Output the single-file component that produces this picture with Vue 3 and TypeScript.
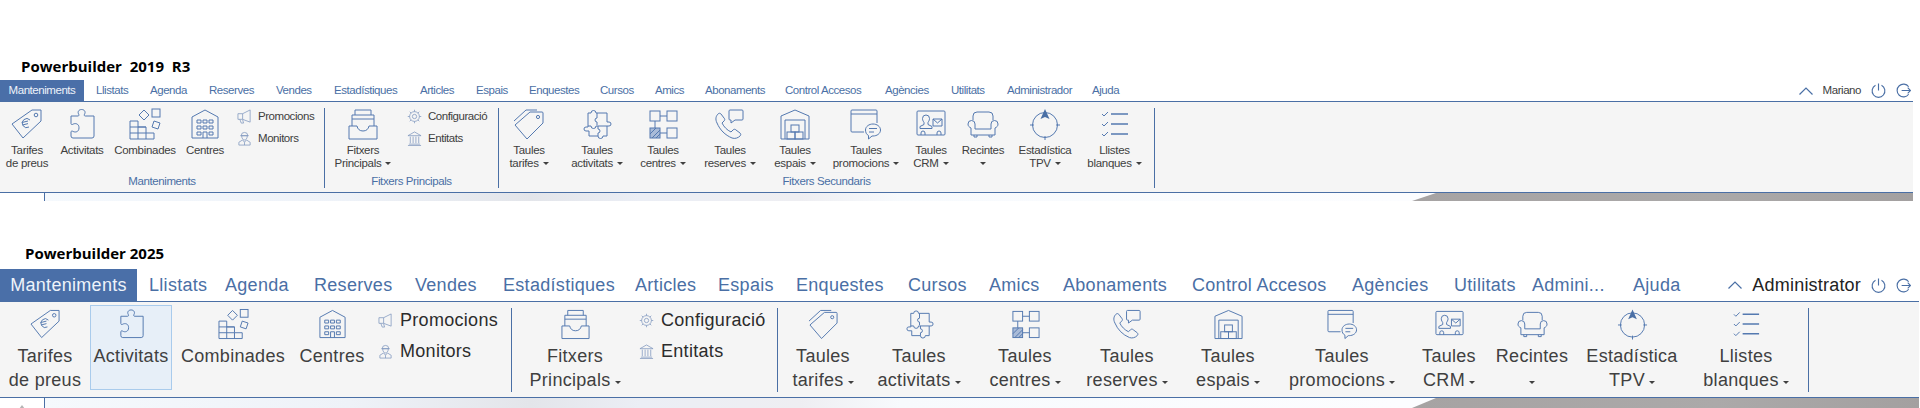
<script setup lang="ts">
interface Tab {
  name: string;
  w: number;
}

interface BigItem {
  icon: string;
  top: string;
  bottom?: string;
  w: number;
  caret?: boolean;
  hover?: boolean;
}

interface SmallItem {
  icon: string;
  name: string;
}

interface Group {
  label?: string;
  w: number;
  items: BigItem[];
  small?: SmallItem[];
  smallPad?: number;
}

interface Release {
  key: string;
  title: string;
  user: string;
  tabs: Tab[];
  groups: Group[];
}

const names = ['Llistats', 'Agenda', 'Reserves', 'Vendes', 'Estadístiques', 'Articles', 'Espais', 'Enquestes', 'Cursos', 'Amics', 'Abonaments', 'Control Accesos', 'Agències', 'Utilitats', 'Administrador', 'Ajuda'];
const widths2019 = [54, 59, 67, 58, 86, 56, 53, 71, 55, 50, 80, 100, 66, 56, 85, 40];
const widths2025 = [76, 89, 101, 88, 132, 83, 78, 112, 81, 74, 129, 160, 102, 78, 101, 60];

const makeTabs = (w: number[], short: boolean): Tab[] =>
  names.map((name, i) => ({ name: short && name === 'Administrador' ? 'Admini...' : name, w: w[i] }));

const small1: SmallItem[] = [
  { icon: 'megaphone', name: 'Promocions' },
  { icon: 'guard', name: 'Monitors' },
];
const small2: SmallItem[] = [
  { icon: 'gear', name: 'Configuració' },
  { icon: 'bank', name: 'Entitats' },
];

const secondary = (w: number[]): BigItem[] => [
  { icon: 'tags', top: 'Taules', bottom: 'tarifes', caret: true, w: w[0] },
  { icon: 'puzzle4', top: 'Taules', bottom: 'activitats', caret: true, w: w[1] },
  { icon: 'flow', top: 'Taules', bottom: 'centres', caret: true, w: w[2] },
  { icon: 'phone', top: 'Taules', bottom: 'reserves', caret: true, w: w[3] },
  { icon: 'warehouse', top: 'Taules', bottom: 'espais', caret: true, w: w[4] },
  { icon: 'chat', top: 'Taules', bottom: 'promocions', caret: true, w: w[5] },
  { icon: 'card', top: 'Taules', bottom: 'CRM', caret: true, w: w[6] },
  { icon: 'chair', top: 'Recintes', caret: true, w: w[7] },
  { icon: 'compass', top: 'Estadística', bottom: 'TPV', caret: true, w: w[8] },
  { icon: 'checks', top: 'Llistes', bottom: 'blanques', caret: true, w: w[9] },
];

const releases: Release[] = [
  {
    key: 'r2019',
    title: 'Powerbuilder  2019  R3',
    user: 'Mariano',
    tabs: makeTabs(widths2019, false),
    groups: [
      {
        label: 'Manteniments',
        w: 325,
        smallPad: 7,
        small: small1,
        items: [
          { icon: 'price', top: 'Tarifes', bottom: 'de preus', w: 54 },
          { icon: 'puzzle', top: 'Activitats', w: 56 },
          { icon: 'blocks', top: 'Combinades', w: 70 },
          { icon: 'building', top: 'Centres', w: 50 },
        ],
      },
      {
        label: 'Fitxers Principals',
        w: 174,
        smallPad: 6,
        small: small2,
        items: [{ icon: 'tray', top: 'Fitxers', bottom: 'Principals', caret: true, w: 76 }],
      },
      {
        label: 'Fitxers Secundaris',
        w: 656,
        items: secondary([60, 76, 56, 78, 52, 90, 40, 64, 60, 79]),
      },
    ],
  },
  {
    key: 'r2025',
    title: 'Powerbuilder 2025',
    user: 'Administrator',
    tabs: makeTabs(widths2025, true),
    groups: [
      {
        w: 512,
        smallPad: 8,
        small: small1,
        items: [
          { icon: 'price', top: 'Tarifes', bottom: 'de preus', w: 90 },
          { icon: 'puzzle', top: 'Activitats', w: 82, hover: true },
          { icon: 'blocks', top: 'Combinades', w: 122 },
          { icon: 'building', top: 'Centres', w: 76 },
        ],
      },
      {
        w: 266,
        smallPad: 1,
        small: small2,
        items: [{ icon: 'tray', top: 'Fitxers', bottom: 'Principals', caret: true, w: 126 }],
      },
      {
        w: 1031,
        items: secondary([90, 102, 110, 94, 108, 120, 94, 72, 128, 100]),
      },
    ],
  },
];
</script>

<template>
  <svg class="sprite" xmlns="http://www.w3.org/2000/svg">
    <symbol id="price" viewBox="0 0 32 32">
      <path d="M1 16 L21 2 H30 V13 L12 30 Z" />
      <circle cx="25" cy="7" r="1.8" />
      <path d="M19 12 a4.5 4.5 0 1 0 -1 7 M11 14.5 l6 -1.5 M11.5 17 l5.5 -1.4" />
    </symbol>
    <symbol id="puzzle" viewBox="0 0 32 32">
      <path d="M5 8 H12 c1 0 1.2 -1 .6 -2 c-1.2 -2 0 -4.5 3 -4.5 s4.2 2.5 3 4.5 c-.6 1 -.4 2 .6 2 H28 V28 a2 2 0 0 1 -2 2 H7 a2 2 0 0 1 -2 -2 V24 c0 -1 1 -1.2 2 -.6 c2 1.2 6 .8 6 -3.6 s-4 -4.8 -6 -3.6 c-1 .6 -2 .4 -2 -.6 Z" />
    </symbol>
    <symbol id="blocks" viewBox="0 0 32 32">
      <path d="M1 13 H9 V19 H17 V25 H25 V31 H1 Z M1 19 H17 M1 25 H17 M9 19 V31 M17 25 V31" />
      <path d="M15 2 L20 7 L15 12 L10 7 Z" />
      <rect x="23" y="1" width="8" height="8" />
      <path d="M25 13 L31 15 L29 21 L23 19 Z" />
    </symbol>
    <symbol id="building" viewBox="0 0 32 32">
      <path d="M3 30 V9 L16 2 L29 9 V30 Z" />
      <path d="M8 12 h4 v3 h-4 z M14 12 h4 v3 h-4 z M20 12 h4 v3 h-4 z M8 18 h4 v3 h-4 z M14 18 h4 v3 h-4 z M20 18 h4 v3 h-4 z M8 24 h4 v3 h-4 z M20 24 h4 v3 h-4 z M14 30 v-6 h4 v6" />
    </symbol>
    <symbol id="tray" viewBox="0 0 32 32">
      <path d="M2 18 H10 c.6 3 2.5 5 6 5 s5.400 -2 6 -5 H30 V31 H2 Z" />
      <path d="M5 18 V7 H27 V18 M8 7 V2 H24 V7 M5 11 H27" />
    </symbol>
    <symbol id="tags" viewBox="0 0 32 32">
      <path d="M2 17 L17 4 H29 a1 1 0 0 1 1 1 V15 L14 31 Z" />
      <path d="M1 13 L13 2 H24" />
      <circle cx="25" cy="9" r="1.6" />
    </symbol>
    <symbol id="puzzle4" viewBox="0 0 32 32">
      <path d="M7 5 h3 a2.500 2.500 0 0 1 5 0 h11 v9 h2 a2 2 0 0 1 0 4 h-2 v10 h-4 a2.500 2.500 0 0 1 -5 0 h-9 v-5 h-3 a2 2 0 0 1 0 -4 h2 z" />
      <path d="M16 5 v5 a2 2 0 0 0 0 4 v3 M7 18 h3 a2.500 2.500 0 0 0 5 0 h11 M17 18 v3 a2 2 0 0 1 0 4 v3" />
    </symbol>
    <symbol id="flow" viewBox="0 0 32 32">
      <rect x="3" y="3" width="10" height="10" />
      <rect x="20" y="3" width="10" height="10" />
      <rect class="hatched" x="3" y="20" width="10" height="10" />
      <rect x="20" y="20" width="10" height="10" />
      <path d="M13 8 H20 M8 13 V20 M13 25 H20 M3 26 L9 20 M5 30 L13 22 M9 30 L13 26" />
    </symbol>
    <symbol id="phone" viewBox="0 0 32 32">
      <path d="M4 6 c-2 2 -3 5 -1 9 c3 7 8 12 15 15 c3 1 6 0 8 -2 c1 -1 1 -2 0 -3 l-4 -3 c-1 -1 -2 -1 -3 0 l-2 2 c-4 -2 -7 -5 -9 -9 l2 -2 c1 -1 1 -2 0 -3 l-3 -4 c-1 -1 -2 -1 -3 0 z" />
      <path d="M16 2 H28 a1 1 0 0 1 1 1 V11 a1 1 0 0 1 -1 1 H21 L17 15 V12 H16 a1 1 0 0 1 -1 -1 V3 a1 1 0 0 1 1 -1 z" />
    </symbol>
    <symbol id="warehouse" viewBox="0 0 32 32">
      <path d="M2 31 V8 L16 2 L30 8 V31 Z" />
      <path d="M6 31 V12 H26 V31" />
      <rect x="12" y="17" width="8" height="7" />
      <rect x="8" y="24" width="8" height="7" />
      <rect x="16" y="24" width="8" height="7" />
    </symbol>
    <symbol id="chat" viewBox="0 0 32 32">
      <path d="M27 15 V3 a1 1 0 0 0 -1 -1 H2 a1 1 0 0 0 -1 1 V23 a1 1 0 0 0 1 1 H14 M1 6 H27" />
      <path d="M23 16 c4 0 7.500 2.500 7.500 6 s-3.500 6 -7.500 6 h-1 l-3.500 3 v-3.500 c-2 -1 -3 -3 -3 -5.500 c0 -3.500 3.500 -6 7.500 -6 z" />
      <path d="M19 20.500 H27 M19 24 H24" />
    </symbol>
    <symbol id="card" viewBox="0 0 32 32">
      <rect x="2" y="3" width="28" height="24" rx="1" />
      <path d="M11 7 a3.500 3.500 0 0 1 3.500 3.500 c0 2 -1 3 -1.500 4 v2 l4 2 v2 H5 v-2 l4 -2 v-2 c-.5 -1 -1.500 -2 -1.500 -4 A3.500 3.500 0 0 1 11 7 z" />
      <path d="M18 11 H27 V18 H18 Z M18 11 L22.500 15 L27 11 M6 27 v-2 a2 2 0 0 1 4 0 v2 M22 27 v-2 a2 2 0 0 1 4 0 v2" />
    </symbol>
    <symbol id="chair" viewBox="0 0 32 32">
      <path d="M6 12 V8 a4 4 0 0 1 4 -4 H22 a4 4 0 0 1 4 4 V12" />
      <path d="M8 21 H24 M8 21 V16 a3.500 3.500 0 0 0 -7 0 c0 2 1 3 3 4 V27 H28 V20 c2 -1 3 -2 3 -4 a3.500 3.500 0 0 0 -7 0 V21" />
      <path d="M7 27 V29 H10 V27 M22 27 V29 H25 V27" />
    </symbol>
    <symbol id="compass" viewBox="0 0 32 32">
      <circle cx="16" cy="17" r="12.500" />
      <path d="M1 17 H5 M27 17 H31 M16 28 V32" />
      <path class="solid" d="M16 1 L20.500 11 L16 9 L11.500 11 Z" />
    </symbol>
    <symbol id="checks" viewBox="0 0 32 32">
      <path d="M3 6 L5 8 L9 4 M3 16 L5 18 L9 14 M3 26 L5 28 L9 24" />
      <path class="thick" d="M12 6 H29 M12 16 H29 M12 26 H29" />
    </symbol>
    <symbol id="megaphone" viewBox="0 0 16 16">
      <path d="M1 5 H6 L14 1 V14 L6 11 H1 Z M6 5 V11 M3 11 L4.500 15 H7 L6 11.500" />
    </symbol>
    <symbol id="guard" viewBox="0 0 16 16">
      <path d="M4.500 5 a3.500 3.500 0 0 1 7 0 Z M3.500 5 H12.500 M5 5 c0 6 6 6 6 0 M2 15 V12 l4 -2.500 L8 12 l2 -2.500 l4 2.500 V15 Z M8 12 V15" />
    </symbol>
    <symbol id="gear" viewBox="0 0 16 16">
      <circle cx="8" cy="8" r="5.200" />
      <circle cx="8" cy="8" r="2.300" />
      <path d="M8 .8 V2.800 M8 13.200 V15.200 M.8 8 H2.800 M13.200 8 H15.200 M2.900 2.900 L4.300 4.300 M11.700 11.700 L13.100 13.100 M2.900 13.100 L4.300 11.700 M11.700 4.300 L13.100 2.900" />
    </symbol>
    <symbol id="bank" viewBox="0 0 16 16">
      <path d="M8 1 L1 5 H15 Z M2 14 H14 M1 15.500 H15 M3.500 6 V13 M6.500 6 V13 M9.500 6 V13 M12.500 6 V13" />
    </symbol>
    <symbol id="chevron" viewBox="0 0 14 8">
      <path d="M.5 7.500 L7 1 L13.500 7.500" />
    </symbol>
    <symbol id="power" viewBox="0 0 16 16">
      <path d="M4.800 2.500 a6.800 6.800 0 1 0 6.400 0 M8 .5 V8" />
    </symbol>
    <symbol id="logout" viewBox="0 0 16 16">
      <path d="M13.500 4 A6.800 6.800 0 1 0 13.500 12 M6 8 H15.500 M12.500 5 L15.500 8 L12.500 11" />
    </symbol>
  </svg>

  <section v-for="rel in releases" :key="rel.key" class="release" :class="rel.key">
    <h2 class="title">{{ rel.title }}</h2>

    <div class="tabs">
      <div class="tab active">Manteniments</div>
      <div v-for="tab in rel.tabs" :key="tab.name" class="tab" :style="{ width: tab.w + 'px' }">{{ tab.name }}</div>
      <div class="tools">
        <svg class="tool-chevron"><use href="#chevron" /></svg>
        <span class="user">{{ rel.user }}</span>
        <svg class="tool-icon"><use href="#power" /></svg>
        <svg class="tool-icon"><use href="#logout" /></svg>
      </div>
    </div>

    <div class="ribbon">
      <div v-for="(group, g) in rel.groups" :key="g" class="group" :style="{ width: group.w + 'px' }">
        <div class="items">
          <div
            v-for="item in group.items"
            :key="item.icon"
            class="item"
            :class="{ hover: item.hover }"
            :style="{ width: item.w + 'px' }"
          >
            <svg class="big-icon"><use :href="'#' + item.icon" /></svg>
            <div class="line">{{ item.top }}</div>
            <div v-if="item.bottom || item.caret" class="line">
              {{ item.bottom }}<i v-if="item.caret" class="caret" :class="{ alone: !item.bottom }"></i>
            </div>
          </div>
          <div v-if="group.small" class="small-list" :style="{ paddingLeft: group.smallPad + 'px' }">
            <div v-for="s in group.small" :key="s.name" class="small-item">
              <svg class="small-icon"><use :href="'#' + s.icon" /></svg>
              <span>{{ s.name }}</span>
            </div>
          </div>
        </div>
        <div v-if="group.label" class="group-label">{{ group.label }}</div>
      </div>
    </div>

    <div class="strip">
      <div class="strip-tick"></div>
      <div class="strip-shade"></div>
      <div v-if="rel.key === 'r2025'" class="strip-arrow"></div>
    </div>
  </section>
</template>

<style scoped>
.sprite {
  display: none;
}

.release {
  font-family: "Liberation Sans", Arial, sans-serif;
  color: #404040;
}

.r2019 {
  width: 1913px;
  padding-top: 56px;
}

.r2025 {
  width: 1919px;
  padding-top: 42px;
}

.title {
  margin: 0;
  height: 20px;
  font-family: "Open Sans", sans-serif;
  font-size: 15px;
  font-weight: 700;
  line-height: 20px;
  color: #000;
  white-space: pre;
}

.r2019 .title {
  padding-left: 21px;
  margin-bottom: 4px;
}

.r2025 .title {
  padding-left: 25px;
  margin-bottom: 6px;
}

/* tabs */
.tabs {
  display: flex;
  align-items: flex-start;
  border-bottom: 1px solid #4a6fa5;
  box-sizing: border-box;
}

.r2019 .tabs {
  height: 22px;
  font-size: 11.5px;
  letter-spacing: -0.45px;
  line-height: 21px;
}

.r2025 .tabs {
  height: 33px;
  font-size: 18px;
  letter-spacing: 0.3px;
  line-height: 33px;
}

.tab {
  color: #4a6fa5;
  white-space: nowrap;
  flex: none;
}

.tab.active {
  background: #4a6fa8;
  color: #eef3fa;
  text-align: center;
  margin-right: 12px;
}

.r2019 .tab.active {
  width: 84px;
  height: 21px;
}

.r2025 .tab.active {
  width: 137px;
  height: 32px;
}

.tools {
  margin-left: auto;
  display: flex;
  align-items: center;
  gap: 10px;
}

.r2019 .tools {
  height: 21px;
  padding-right: 2px;
}

.r2025 .tools {
  height: 32px;
  padding-right: 8px;
}

.user {
  color: #404040;
}

.r2025 .user {
  color: #222;
  letter-spacing: 0.2px;
}

.tool-chevron {
  width: 14px;
  height: 8px;
  fill: none;
  stroke: #4a6fa5;
  stroke-width: 1.2;
}

.tool-icon {
  width: 15px;
  height: 15px;
  fill: none;
  stroke: #4a6fa5;
  stroke-width: 1.2;
}

/* ribbon */
.ribbon {
  display: flex;
  background: #f5f5f5;
  border-bottom: 1px solid #4a6fa5;
}

.r2019 .ribbon {
  height: 90px;
}

.r2025 .ribbon {
  height: 95px;
}

.group {
  box-sizing: border-box;
  border-right: 1px solid #4a6fa5;
  display: flex;
  flex-direction: column;
  flex: none;
}

.r2019 .group {
  margin: 6px 0 4px;
}

.r2025 .group {
  margin: 6px 0 5px;
}

.items {
  display: flex;
  margin-top: -3px;
  flex: 1;
}

.item {
  box-sizing: border-box;
  flex: none;
  display: flex;
  flex-direction: column;
  align-items: center;
  padding-top: 3px;
  text-align: center;
  white-space: nowrap;
}

.r2019 .items {
  font-size: 11.5px;
  letter-spacing: -0.3px;
}

.r2025 .items {
  font-size: 18px;
  letter-spacing: 0.3px;
}

.r2019 .item {
  height: 69px;
}

.r2025 .item {
  height: 85px;
}

.item.hover {
  background: #e7eff8;
  border: 1px solid #a9cbec;
  padding-top: 2px;
}

.big-icon {
  flex: none;
  fill: none;
  stroke: #5479b0;
  stroke-width: 1;
}

.r2019 .big-icon {
  width: 32px;
  height: 32px;
  margin-bottom: 4px;
}

.r2025 .big-icon {
  width: 31px;
  height: 32px;
  margin-bottom: 4px;
}

.r2019 .line {
  line-height: 13px;
}

.r2025 .line {
  line-height: 24px;
}

.caret {
  display: inline-block;
  width: 0;
  height: 0;
  border-left: 3px solid transparent;
  border-right: 3px solid transparent;
  border-top: 3px solid #404040;
  margin-left: 4px;
  vertical-align: 2px;
}

.caret.alone {
  margin-left: 0;
}

.small-list {
  display: flex;
  flex-direction: column;
  white-space: nowrap;
}

.small-item {
  display: flex;
  align-items: center;
}

.r2019 .small-item {
  height: 22px;
  gap: 6px;
  letter-spacing: -0.45px;
}

.r2025 .small-item {
  height: 31px;
  gap: 7px;
  color: #2c2c2c;
}

.small-icon {
  width: 15px;
  height: 15px;
  flex: none;
  fill: none;
  stroke: #7d96bd;
  stroke-width: 0.8;
}

.group-label {
  height: 14px;
  line-height: 14px;
  font-size: 11.5px;
  letter-spacing: -0.4px;
  color: #4a6fa5;
  text-align: center;
}

/* strip under the ribbon */
.strip {
  position: relative;
  background: linear-gradient(to right, #fff 44px, #f5f9fd 45px, #eef2f8 350px, #e3e5ea 530px, #ebeef5 640px, #eeeef2 800px, #f7fafd 900px, #fcfdff 1400px);
  overflow: hidden;
}

.r2019 .strip {
  height: 8px;
}

.r2025 .strip {
  height: 10px;
}

.strip-tick {
  position: absolute;
  left: 44px;
  top: 0;
  bottom: 0;
  width: 1px;
  background: #4a6fa5;
}

.strip-shade {
  position: absolute;
  left: 1412px;
  right: 0;
  top: 0;
  bottom: 0;
  background: linear-gradient(to right, #a6a3a3, #aba9a9 60%, #a3a0a0);
  clip-path: polygon(24px 0, 100% 0, 100% 100%, 0 100%);
}

.strip-arrow {
  position: absolute;
  left: 19px;
  top: 7px;
  width: 0;
  height: 0;
  border-left: 3px solid transparent;
  border-right: 3px solid transparent;
  border-bottom: 4px solid #b5b5b5;
}
</style>

<style>
.solid {
  fill: #4a6fa5;
  stroke: none;
}

.hatched {
  fill: #a9bbd8;
}

.thick {
  stroke-width: 1.6;
}
</style>
